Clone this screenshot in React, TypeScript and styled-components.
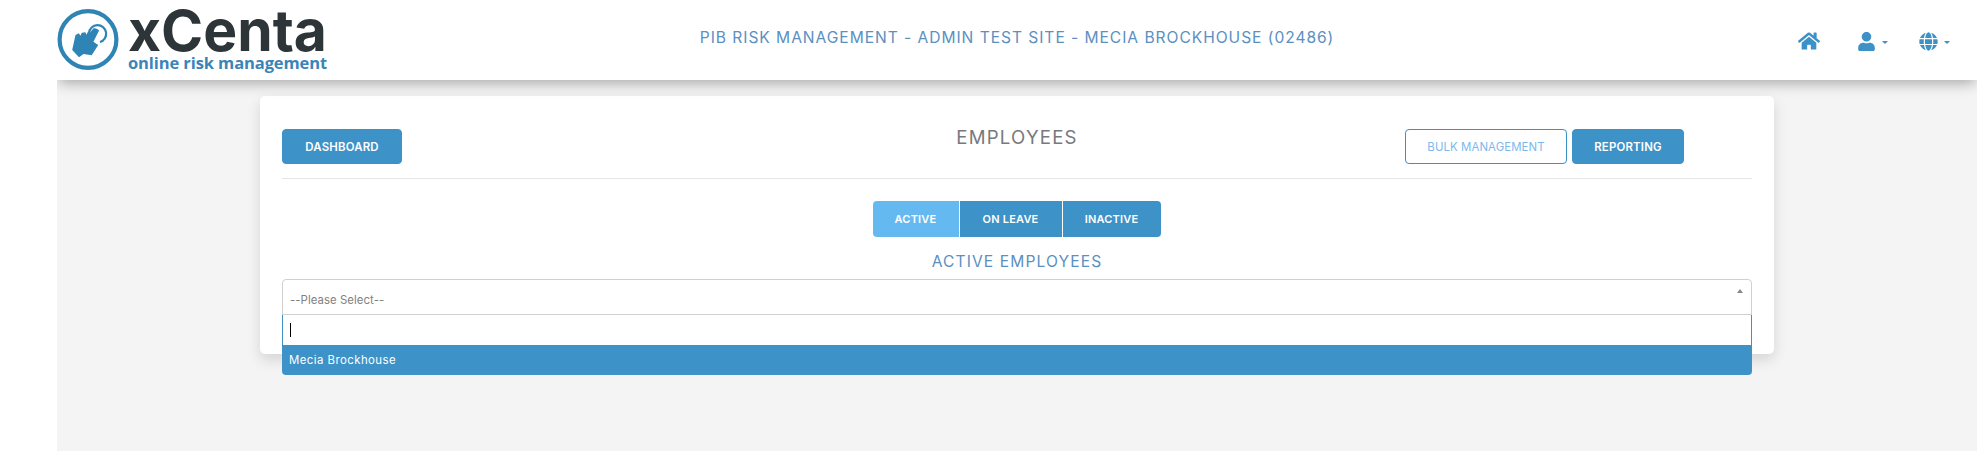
import React from 'react';
import styled, { createGlobalStyle } from 'styled-components';
import { FaHome, FaUser, FaGlobe } from 'react-icons/fa';

const Global = createGlobalStyle`
    html, body {
        margin: 0;
        height: 100%;
        overflow: hidden;
        background: #fff;
        font-family: Inter, "Liberation Sans", sans-serif;
    }
`

const Page = styled.div`
    display: flex;
    height: 451px;
    background: #fff;
`

const Gutter = styled.div`
    width: 57px;
    flex-shrink: 0;
    background: #fff;
    position: relative;
    z-index: 2;
`

const Main = styled.main`
    flex: 1;
    min-width: 0;
    background: #f4f4f4;
    display: flex;
    flex-direction: column;
`

const Header = styled.header`
    height: 80px;
    flex-shrink: 0;
    background: #fff;
    display: grid;
    grid-template-columns: 1fr auto 1fr;
    align-items: center;
    box-shadow: 0 5px 13px -2px rgba(0, 0, 0, 0.32);
    position: relative;
`

const Logo = styled.div`
    display: flex;
    align-items: flex-start;
    gap: 9px;
    height: 80px;
    padding-top: 9px;
    box-sizing: border-box;
`

const LogoWords = styled.div`
    display: flex;
    flex-direction: column;
    width: 200px;
`

const LogoName = styled.div`
    font-weight: 700;
    font-size: 57px;
    line-height: 43px;
    letter-spacing: 0;
    color: #2e3539;
    white-space: nowrap;
`

const LogoTag = styled.div`
    font-family: "Open Sans", sans-serif;
    font-weight: 700;
    font-size: 16.5px;
    line-height: 16px;
    letter-spacing: -0.1px;
    color: #3a85b8;
    white-space: nowrap;
    margin-top: 3px;
`

const SiteTitle = styled.div`
    font-size: 15.6px;
    letter-spacing: 0.95px;
    color: #5b90c0;
    white-space: nowrap;
    margin-bottom: 6px;
`

const Nav = styled.nav`
    display: flex;
    justify-content: flex-end;
    align-items: center;
    padding-right: 27px;
    gap: 31px;
    color: #3c91c7;
    margin-top: 2px;
`

const NavItem = styled.span`
    display: flex;
    align-items: center;
    gap: 6px;
`

const HomeItem = styled(NavItem)`
    margin-right: 6px;
`

const Caret = styled.span`
    width: 0;
    height: 0;
    border-left: 3px solid transparent;
    border-right: 3px solid transparent;
    border-top: 3px solid currentColor;
    margin-top: 3px;
`

const Content = styled.div`
    flex: 1;
    padding: 16px 0 0 203px;
`

const Card = styled.section`
    width: 1514px;
    height: 258px;
    box-sizing: border-box;
    background: #fff;
    border-radius: 5px;
    box-shadow: 0 6px 14px rgba(0, 0, 0, 0.13);
    padding: 33px 22px 0;
`

const TopRow = styled.div`
    display: grid;
    grid-template-columns: 1fr 1fr 1fr;
    height: 49px;
    border-bottom: 1px solid #e5e5e5;
`

const Title = styled.h1`
    margin: 0;
    font-weight: 400;
    font-size: 18.6px;
    line-height: 17px;
    letter-spacing: 1.25px;
    color: #77797e;
    text-align: center;
`

const Actions = styled.div`
    display: flex;
    justify-content: flex-end;
    align-items: flex-start;
    gap: 5px;
    padding-right: 68px;
`

const Button = styled.button<{ $outline?: boolean; $w: number }>`
    width: ${p => p.$w}px;
    height: 35px;
    box-sizing: border-box;
    border-radius: 4px;
    border: 1px solid #3c91c7;
    background: ${p => (p.$outline ? '#fff' : '#3d92c8')};
    color: ${p => (p.$outline ? '#7db9ec' : '#fff')};
    font-family: inherit;
    font-size: 11.4px;
    letter-spacing: ${p => (p.$outline ? '0.1px' : '0.2px')};
    font-weight: ${p => (p.$outline ? 400 : 600)};
    padding: 0;
    text-transform: uppercase;
`

const Tabs = styled.div`
    display: flex;
    justify-content: center;
    margin-top: 22px;
    padding-right: 1px;
`

const Tab = styled.button<{ $active?: boolean; $w: number }>`
    width: ${p => p.$w}px;
    height: 36px;
    border: 0;
    padding: 0;
    margin-left: 1px;
    background: ${p => (p.$active ? '#64baf0' : '#3d92c8')};
    color: #fff;
    font-family: inherit;
    font-size: 11px;
    letter-spacing: 0.2px;
    font-weight: 600;

    &:first-child {
        margin-left: 0;
        border-radius: 4px 0 0 4px;
    }

    &:last-child {
        border-radius: 0 4px 4px 0;
    }
`

const SubTitle = styled.h2`
    margin: 16px 0 0;
    font-weight: 400;
    font-size: 15.6px;
    line-height: 18px;
    letter-spacing: 1.1px;
    color: #5b90c0;
    text-align: center;
`

const SelectWrap = styled.div`
    position: relative;
    margin-top: 8px;
`

const SelectBox = styled.div`
    height: 36px;
    box-sizing: border-box;
    border: 1px solid #d0d0d0;
    border-radius: 4px 4px 0 0;
    padding: 11px 7px 0;
    font-size: 11.4px;
    letter-spacing: 0.05px;
    line-height: 18px;
    color: #85817c;
    position: relative;
`

const UpCaret = styled.span`
    position: absolute;
    top: 9px;
    right: 8px;
    width: 0;
    height: 0;
    border-left: 3px solid transparent;
    border-right: 3px solid transparent;
    border-bottom: 4px solid #888;
`

const Dropdown = styled.div`
    position: absolute;
    left: 0;
    right: 0;
    top: 35px;
    border-top: 1px solid #d0d0d0;
    border-radius: 0 0 4px 4px;
    overflow: hidden;
`

const SearchRow = styled.div`
    height: 30px;
    box-sizing: border-box;
    background: #fff;
    border-left: 1px solid #3d92c8;
    border-right: 1px solid #3d92c8;
    padding: 8px 7px 0;
`

const Cursor = styled.span`
    display: block;
    width: 1px;
    height: 14px;
    background: #000;
`

const Option = styled.div`
    height: 30px;
    background: #3d92c8;
    color: #fff;
    font-size: 11.4px;
    letter-spacing: 0.45px;
    line-height: 30px;
    padding-left: 7px;
`

const HandMark = () => (
    <svg width="62" height="61" viewBox="0 0 62 61">
        <circle cx="31" cy="30.5" r="28.4" fill="none" stroke="#2f84b6" strokeWidth="4.2" />
        <path d="M32 24a8.6 8.6 0 1 1 11 9" fill="none" stroke="#2f84b6" strokeWidth="2.2" />
        <path
            d="M36.3 19.6c1.5-1 4.6.2 5.8 2L36.4 32.7l4.8 3.2-6.5 10.3-8.2-1.2-4.5 3.3-6.8-7.3 3.3-15 3.4-1.7 1.5 2.4 1.4-2.9 3.6-.6 1 2.6 1.2-2.5 2.2.4z"
            fill="#2f84b6"
        />
    </svg>
)

export default function App() {
    return (
        <Page>
            <Global />
            <Gutter />
            <Main>
                <Header>
                    <Logo>
                        <HandMark />
                        <LogoWords>
                            <LogoName>xCenta</LogoName>
                            <LogoTag>online risk management</LogoTag>
                        </LogoWords>
                    </Logo>
                    <SiteTitle>PIB RISK MANAGEMENT - ADMIN TEST SITE - MECIA BROCKHOUSE (02486)</SiteTitle>
                    <Nav>
                        <HomeItem><FaHome size={22} /></HomeItem>
                        <NavItem><FaUser size={19} /><Caret /></NavItem>
                        <NavItem><FaGlobe size={19} /><Caret /></NavItem>
                    </Nav>
                </Header>
                <Content>
                    <Card>
                        <TopRow>
                            <div><Button $w={120}>Dashboard</Button></div>
                            <Title>EMPLOYEES</Title>
                            <Actions>
                                <Button $outline $w={162}>Bulk Management</Button>
                                <Button $w={112}>Reporting</Button>
                            </Actions>
                        </TopRow>
                        <Tabs>
                            <Tab $active $w={86}>ACTIVE</Tab>
                            <Tab $w={102}>ON LEAVE</Tab>
                            <Tab $w={98}>INACTIVE</Tab>
                        </Tabs>
                        <SubTitle>ACTIVE EMPLOYEES</SubTitle>
                        <SelectWrap>
                            <SelectBox>
                                --Please Select--
                                <UpCaret />
                            </SelectBox>
                            <Dropdown>
                                <SearchRow><Cursor /></SearchRow>
                                <Option>Mecia Brockhouse</Option>
                            </Dropdown>
                        </SelectWrap>
                    </Card>
                </Content>
            </Main>
        </Page>
    )
}
